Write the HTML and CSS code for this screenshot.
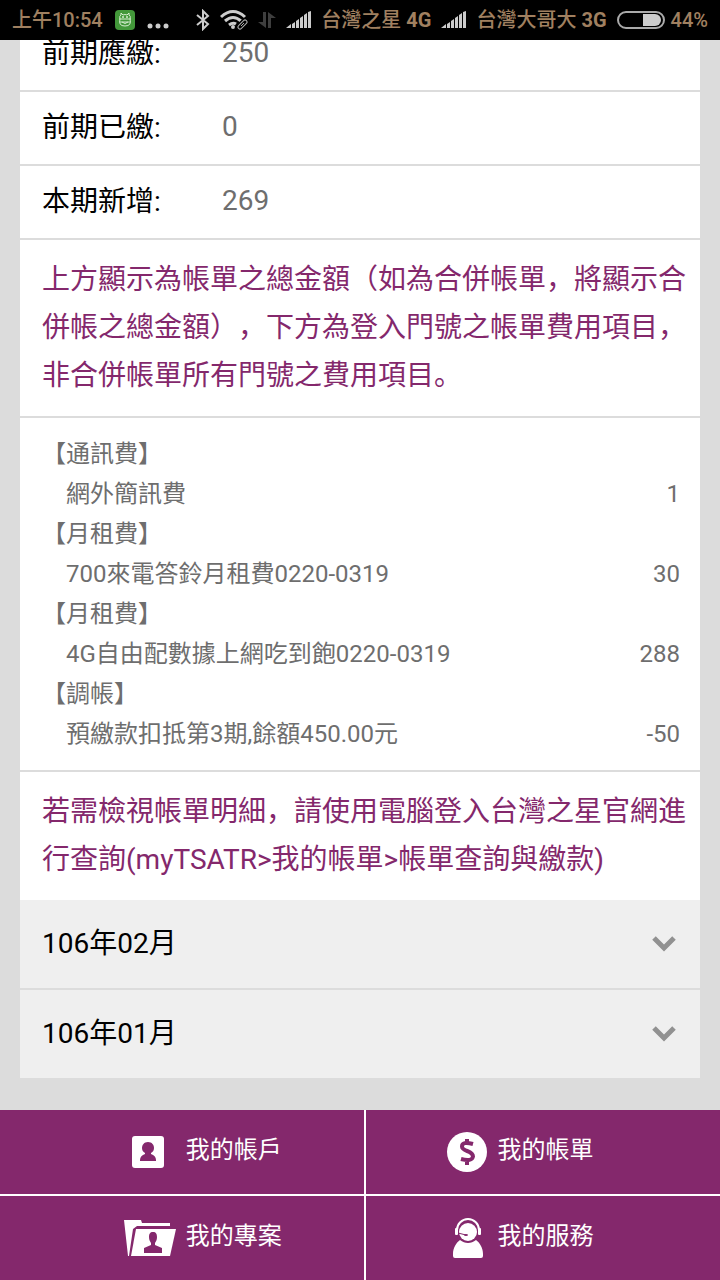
FILE: index.html
```html
<!DOCTYPE html>
<html lang="zh-CN">

<head>
  <meta charset="utf-8">
  <meta name="viewport" content="width=device-width, initial-scale=1">
  <title>我的帳單</title>
  <link rel="stylesheet" href="styles.css">
</head>

<body>
<header class="statusbar">
  <div class="status-left">
    <span>上午10:54</span>
    <svg width="20" height="20" viewBox="0 0 20 20">
      <rect width="20" height="20" rx="4" fill="#43983a"/>
      <g fill="none" stroke="#d5edcf">
        <path d="M5 9Q4 6 6 5L6 3 8 5Q10 4 12 5L14 3 14 5Q16 6 15 9M4 9h12M5 9Q3 16 10 16T15 9M5 12h10M7 12q3 3 6 0"/>
      </g>
      <circle cx="8" cy="7" r="1" fill="#d5edcf"/><circle cx="12" cy="7" r="1" fill="#d5edcf"/>
    </svg>
    <svg width="22" height="20" viewBox="0 0 22 20" fill="#ccc">
      <circle cx="3" cy="16" r="2.500"/><circle cx="11" cy="16" r="2.500"/><circle cx="19" cy="16" r="2.500"/>
    </svg>
  </div>
  <div class="status-right">
    <svg width="14" height="22" viewBox="0 0 14 22" fill="none" stroke="#ccc" stroke-width="2">
      <path d="M1 6l11 9-5 5V2l5 5-11 9"/>
    </svg>
    <svg width="28" height="22" viewBox="0 0 28 22" fill="none" stroke="#ccc" stroke-width="3">
      <path d="M1 8Q13 -3 25 8M5 12Q13 5 21 12M9 16q4-3 7-1"/>
      <circle cx="13" cy="18" r="2" fill="#ccc" stroke="none"/>
      <path d="M19 19l6-6" stroke="#000" stroke-width="8" stroke-linecap="round"/>
      <path d="M20 18l5-5" stroke="#aaa" stroke-width="5" stroke-linecap="round"/>
      <path d="M20 18l5-5" stroke="#000" stroke-width="3" stroke-linecap="round"/>
      <path d="M21 17l3-3" stroke="#aaa" stroke-width="1"/>
    </svg>
    <svg width="18" height="20" viewBox="0 0 18 20" fill="#3e3e3e">
      <path d="M5 2h3v16L0 12h5zM10 2l8 6h-5v10h-3z"/>
    </svg>
    <svg width="25" height="20" viewBox="0 0 25 20" fill="#ccc">
      <path d="M0 18l5-4v4zM6 14l3-2v6H6zM10 11l3-2v9h-3zM14 8l3-2v12h-3zM18 5l3-2v15h-3zM22 2l3-1v17h-3z"/>
    </svg>
    <span class="carrier">台灣之星 <b>4G</b></span>
    <svg width="25" height="20" viewBox="0 0 25 20" fill="#ccc">
      <path d="M0 18l5-4v4zM6 14l3-2v6H6zM10 11l3-2v9h-3zM14 8l3-2v12h-3zM18 5l3-2v15h-3zM22 2l3-1v17h-3z"/>
    </svg>
    <span class="carrier">台灣大哥大 <b>3G</b></span>
    <span class="battery">
      <svg width="48" height="18" viewBox="0 0 48 18">
        <rect x="1" y="1" width="46" height="16" rx="8" fill="none" stroke="#aaa" stroke-width="2"/>
        <path d="M26 3h12a6 6 0 0 1 0 12H26z" fill="#ccc"/>
      </svg>
      44%
    </span>
  </div>
</header>

<main class="bill">
  <dl class="summary">
    <div class="row"><dt>前期應繳:</dt><dd>250</dd></div>
    <div class="row"><dt>前期已繳:</dt><dd>0</dd></div>
    <div class="row"><dt>本期新增:</dt><dd>269</dd></div>
  </dl>
  <p class="notice">上方顯示為帳單之總金額（如為合併帳單，將顯示合併帳之總金額），下方為登入門號之帳單費用項目，非合併帳單所有門號之費用項目。</p>
  <div class="detail">
    <table>
      <tr><th colspan="2">【通訊費】</th></tr>
      <tr><td>網外簡訊費</td><td class="amount">1</td></tr>
      <tr><th colspan="2">【月租費】</th></tr>
      <tr><td>700來電答鈴月租費0220-0319</td><td class="amount">30</td></tr>
      <tr><th colspan="2">【月租費】</th></tr>
      <tr><td>4G自由配數據上網吃到飽0220-0319</td><td class="amount">288</td></tr>
      <tr><th colspan="2">【調帳】</th></tr>
      <tr><td>預繳款扣抵第3期,餘額450.00元</td><td class="amount">-50</td></tr>
    </table>
  </div>
  <p class="notice">若需檢視帳單明細，請使用電腦登入台灣之星官網進行查詢(myTSATR&gt;我的帳單&gt;帳單查詢與繳款)</p>
  <button type="button" class="month">
    <span>106年02月</span>
    <svg width="24" height="16" viewBox="0 0 24 16" fill="none" stroke="#919191" stroke-width="5"><path d="M2 2l10 10L22 2"/></svg>
  </button>
  <button type="button" class="month">
    <span>106年01月</span>
    <svg width="24" height="16" viewBox="0 0 24 16" fill="none" stroke="#919191" stroke-width="5"><path d="M2 2l10 10L22 2"/></svg>
  </button>
</main>

<nav class="menu">
  <a href="#account">
    <svg width="52" height="40" viewBox="0 0 52 40">
      <rect x="8" y="4" width="32" height="32" rx="3" fill="#fff"/>
      <path d="M24 10c4 0 6 3 6 6 0 2-1 4-3 5v1c3 1 5 3 5 6v1H16v-1c0-3 2-5 5-6v-1c-2-1-3-3-3-5 0-3 2-6 6-6z" fill="#84286c"/>
    </svg>
    <span>我的帳戶</span>
  </a>
  <a href="#bill">
    <svg width="40" height="40" viewBox="0 0 40 40">
      <circle cx="20" cy="20" r="20" fill="#fff"/>
      <path d="M26 12Q15 9 15 14.500C15 20 26 18 26 24.500Q25 30 14 27M20 7v5M20 28v5" fill="none" stroke="#84286c" stroke-width="4"/>
    </svg>
    <span>我的帳單</span>
  </a>
  <a href="#project">
    <svg width="52" height="40" viewBox="0 0 52 40">
      <path d="M0 2h17l1 3h28v3H13L9 11 5 38H4z" fill="#fff"/>
      <path d="M12 11h40l-6 27H7z" fill="#fff"/>
      <path d="M29 14c3 0 4 2 4 5s-1 4-2 6v2l7 3v5H20v-5l7-3v-2c-1-2-2-3-2-6s1-5 4-5z" fill="#84286c"/>
    </svg>
    <span>我的專案</span>
  </a>
  <a href="#service">
    <svg width="40" height="40" viewBox="0 0 40 40">
      <path d="M13 22c-4 3-7 8-7 14v2q0 2 2 2h26q2 0 2-2v-2c0-6-3-11-7-14-5 4-11 4-16 0z" fill="#fff"/>
      <circle cx="21" cy="14" r="9" fill="#fff"/>
      <path d="M10 12a11 11 0 0 1 22 0" fill="none" stroke="#fff" stroke-width="2"/>
      <rect x="8" y="10" width="3" height="7" rx="1" fill="#fff"/><rect x="31" y="10" width="3" height="7" rx="1" fill="#fff"/>
      <path d="M11 15l8 2" fill="none" stroke="#84286c" stroke-width="1"/><ellipse cx="19" cy="17" rx="2" ry="1" fill="#84286c"/>
    </svg>
    <span>我的服務</span>
  </a>
</nav>
</body>
</html>
```
FILE: styles.css
```css
* { box-sizing: border-box; }

body {
  margin: 0;
  padding-top: 18px;
  background: #dcdcdc;
  color: #000;
  font: 28px/48px Roboto, "Noto Sans CJK SC", sans-serif;
  text-spacing-trim: space-all;
}
svg { display: block; flex: none; }

/* status bar stays above the scrolled bill */
.statusbar {
  position: fixed;
  top: 0;
  left: 0;
  right: 0;
  z-index: 1;
  display: flex;
  justify-content: space-between;
  align-items: center;
  height: 40px;
  padding: 0 12px;
  background: #000;
  color: #a08060;
  font-size: 20px;
  line-height: 40px;
  font-weight: 500;
  white-space: nowrap;
}
.status-left { display: flex; align-items: center; gap: 12px; }
.status-right { display: flex; align-items: center; gap: 10px; }
.carrier b { font-weight: 700; }
.battery { display: flex; align-items: center; gap: 6px; }

.bill { margin: 0 20px 32px; background: #fff; }

.summary { margin: 0; }
.row {
  display: flex;
  align-items: center;
  height: 74px;
  padding: 0 22px;
  border-bottom: 2px solid #dcdcdc;
}
.row dt { width: 180px; }
.row dd { margin: 0; padding-bottom: 2px; color: #6e6e6e; }

.notice {
  margin: 0;
  padding: 16px 12px 16px 22px;
  color: #84286c;
}

.detail {
  padding: 16px 20px 16px 22px;
  border-top: 2px solid #dcdcdc;
  border-bottom: 2px solid #dcdcdc;
}
.detail table {
  width: 100%;
  border-collapse: collapse;
  color: #6e6e6e;
  font-size: 24px;
  line-height: 40px;
}
.detail th, .detail td { height: 40px; padding: 0; text-align: left; font-weight: 400; }
.detail td:first-child { padding-left: 24px; }
.detail .amount { text-align: right; }

.month {
  display: flex;
  justify-content: space-between;
  align-items: center;
  width: 100%;
  height: 88px;
  padding: 0 24px 0 22px;
  border: 0;
  background: #efefef;
  color: #000;
  font: inherit;
}
.month + .month { height: 90px; border-top: 2px solid #dcdcdc; }

.menu {
  display: grid;
  grid-template-columns: 364fr 354fr;
  gap: 2px;
  background: #fff;
}
.menu a {
  display: flex;
  align-items: center;
  gap: 10px;
  height: 84px;
  padding-left: 34%;
  background: #84286c;
  color: #fff;
  font-size: 24px;
  text-decoration: none;
}
.menu a:nth-child(even) { padding-left: 23%; }
.menu span { padding-bottom: 4px; }
```
